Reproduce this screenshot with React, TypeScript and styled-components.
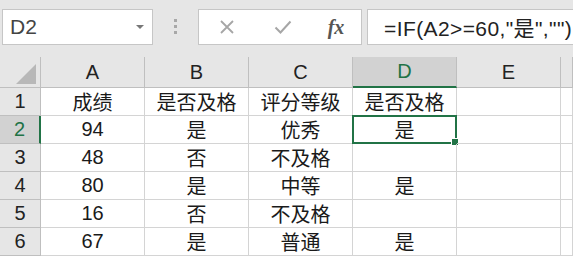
import React from 'react'
import styled, { createGlobalStyle } from 'styled-components'

const GlobalStyle = createGlobalStyle`
  body {
    margin: 0;
    background: #ffffff;
    font-family: "Liberation Sans", "Noto Sans CJK SC", sans-serif;
  }
`

const Page = styled.div`
  width: 573px;
  height: 259px;
  overflow: hidden;
  background: #ffffff;
`

const Toolbar = styled.div`
  display: flex;
  align-items: flex-start;
  height: 57px;
  padding-top: 9px;
  padding-left: 2px;
  box-sizing: border-box;
  background: #e6e6e6;
`

const NameBox = styled.div`
  display: flex;
  align-items: center;
  justify-content: space-between;
  width: 151px;
  height: 36px;
  box-sizing: border-box;
  padding: 0 8px 0 7px;
  background: #ffffff;
  border: 1px solid #c6c6c6;
  color: #444444;
  font-size: 21px;
`

const DropArrow = styled.span`
  width: 0;
  height: 0;
  border-left: 4px solid transparent;
  border-right: 4px solid transparent;
  border-top: 4px solid #777777;
`

const Dots = styled.div`
  display: flex;
  flex-direction: column;
  gap: 3px;
  margin: 10px 21px 0 21px;
  span {
    width: 3px;
    height: 3px;
    background: #a8a8a8;
  }
`

const FxBox = styled.div`
  display: flex;
  align-items: center;
  width: 164px;
  height: 36px;
  box-sizing: border-box;
  background: #ffffff;
  border: 1px solid #c6c6c6;
`

const FxButton = styled.div<{ $w: number }>`
  display: flex;
  align-items: center;
  justify-content: center;
  width: ${(p) => p.$w}px;
  height: 100%;
`

const FxLabel = styled.span`
  font-family: "Liberation Serif", serif;
  font-style: italic;
  font-weight: bold;
  font-size: 20px;
  color: #555555;
`

const FormulaBar = styled.div`
  flex: 1;
  display: flex;
  align-items: center;
  height: 36px;
  margin-left: 5px;
  box-sizing: border-box;
  padding-left: 16px;
  background: #ffffff;
  border: 1px solid #c6c6c6;
  border-right: none;
  color: #222222;
  font-size: 21px;
  letter-spacing: 0.4px;
  white-space: nowrap;
`

const Grid = styled.div`
  display: grid;
  grid-template-columns: 41px repeat(5, 104px) 1fr;
  grid-auto-rows: 28px;
  grid-template-rows: 31px;
`

const HeadCell = styled.div<{ $active?: boolean; $side?: boolean }>`
  position: relative;
  display: flex;
  align-items: center;
  justify-content: center;
  box-sizing: border-box;
  background: ${(p) => (p.$active ? '#d2d2d2' : '#e6e6e6')};
  color: ${(p) => (p.$active ? '#217346' : '#222222')};
  font-size: 20px;
  border-right: 1px solid ${(p) => (p.$active && p.$side ? '#217346' : '#bfbfbf')};
  border-bottom: 1px solid ${(p) => (p.$active && !p.$side ? '#217346' : '#bfbfbf')};
  ${(p) => (p.$active && p.$side ? 'border-right-width: 2px;' : '')}
  ${(p) => (p.$active && !p.$side ? 'border-bottom-width: 2px;' : '')}
`

const Corner = styled(HeadCell)`
  align-items: flex-end;
  justify-content: flex-end;
  padding: 0 4px 3px 0;
`

const Triangle = styled.span`
  width: 0;
  height: 0;
  border-left: 20px solid transparent;
  border-bottom: 20px solid #b8b8b8;
`

const Cell = styled.div`
  position: relative;
  display: flex;
  align-items: center;
  justify-content: center;
  box-sizing: border-box;
  border-right: 1px solid #d4d4d4;
  border-bottom: 1px solid #d4d4d4;
  color: #1a1a1a;
  font-size: 20px;
`

const Selection = styled.div`
  position: absolute;
  left: -1px;
  top: -1px;
  right: -1px;
  bottom: -1px;
  border: 2px solid #217346;
  pointer-events: none;
`

const Handle = styled.span`
  position: absolute;
  right: -4px;
  bottom: -4px;
  width: 6px;
  height: 6px;
  background: #217346;
  border: 1px solid #ffffff;
`

const cols = ['A', 'B', 'C', 'D', 'E', 'F']
const rows: string[][] = [
  ['成绩', '是否及格', '评分等级', '是否及格', '', ''],
  ['94', '是', '优秀', '是', '', ''],
  ['48', '否', '不及格', '', '', ''],
  ['80', '是', '中等', '是', '', ''],
  ['16', '否', '不及格', '', '', ''],
  ['67', '是', '普通', '是', '', ''],
]

export default function App() {
  return (
    <Page>
      <GlobalStyle />
      <Toolbar>
        <NameBox>
          D2
          <DropArrow />
        </NameBox>
        <Dots>
          <span />
          <span />
          <span />
        </Dots>
        <FxBox>
          <FxButton $w={56}>
            <svg width="16" height="16" viewBox="0 0 16 16">
              <path d="M2 2L14 14M14 2L2 14" stroke="#a6a6a6" strokeWidth="1.8" fill="none" />
            </svg>
          </FxButton>
          <FxButton $w={56}>
            <svg width="18" height="16" viewBox="0 0 18 16">
              <path d="M1.5 8.5L6.5 13.5L16.5 2.5" stroke="#a6a6a6" strokeWidth="2" fill="none" />
            </svg>
          </FxButton>
          <FxButton $w={50}>
            <FxLabel>fx</FxLabel>
          </FxButton>
        </FxBox>
        <FormulaBar>=IF(A2&gt;=60,"是","")</FormulaBar>
      </Toolbar>
      <Grid>
        <Corner>
          <Triangle />
        </Corner>
        {cols.map((c) => (
          <HeadCell key={c} $active={c === 'D'}>
            {c === 'F' ? '' : c}
          </HeadCell>
        ))}
        {rows.map((r, i) => (
          <React.Fragment key={i}>
            <HeadCell $side $active={i === 1}>
              {i + 1}
            </HeadCell>
            {r.map((v, j) => (
              <Cell key={j}>
                {v}
                {i === 1 && j === 3 && (
                  <Selection>
                    <Handle />
                  </Selection>
                )}
              </Cell>
            ))}
          </React.Fragment>
        ))}
      </Grid>
    </Page>
  )
}
